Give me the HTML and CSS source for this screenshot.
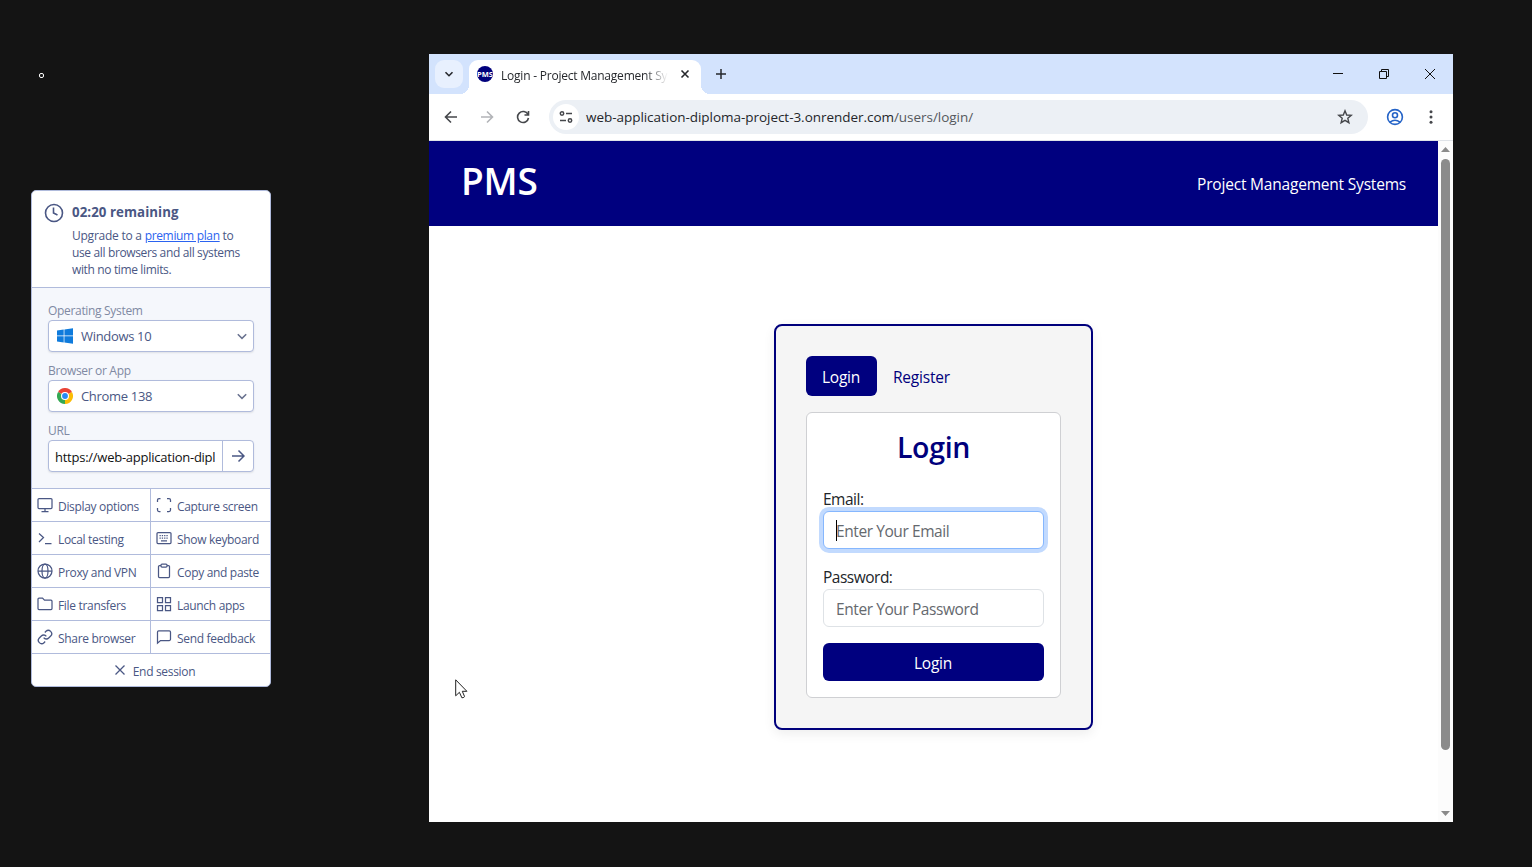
FILE: index.html
```html
<!DOCTYPE html>
<html lang="en">
<head>
<meta charset="utf-8">
<title>Browser session</title>
<link rel="stylesheet" href="styles.css">
</head>
<body>
<svg class="defs" width="0" height="0">
  <defs>
    <symbol id="chev" viewBox="0 0 12 12"><path d="M1.800 4.200 6 8.400l4.200-4.200"/></symbol>
  </defs>
</svg>
<div class="desk">
  <span class="dot"></span>
  <aside class="panel">
    <header class="status">
      <svg class="clock" viewBox="0 0 20 20"><circle cx="10" cy="10" r="8.500"/><path d="M9.500 4.500V10l4 2"/></svg>
      <div>
        <h1 class="remaining">02:20 remaining</h1>
        <p class="upgrade"><span class="lead">Upgrade to a <a href="#">premium plan</a> to</span><br>use all browsers and all systems<br>with no time limits.</p>
      </div>
    </header>
    <section class="settings">
      <label class="caption">Operating System</label>
      <div class="select">
        <svg class="brand" viewBox="0 0 16 16"><path fill="#0f7bdc" d="M0 2.500 6.700 1.500v6.100H0zM7.400 1.400 16 .2v7.400H7.400zM0 8.300h6.700v6.100L0 13.500zM7.400 8.300H16v7.500l-8.600-1.300z"/></svg>
        <span class="value">Windows 10</span>
        <svg class="chev"><use href="#chev"/></svg>
      </div>
      <label class="caption">Browser or App</label>
      <div class="select">
        <svg class="brand" viewBox="0 0 16 16"><path fill="#ea4335" d="M8 8 1.070 4A8 8 0 0 1 14.930 4z"/><path fill="#fbbc05" d="M8 8 14.930 4A8 8 0 0 1 8 16z"/><path fill="#34a853" d="M8 8V16A8 8 0 0 1 1.070 4z"/><path fill="#ea4335" d="M8 4h6.930L8 3.300z"/><path fill="#fbbc05" d="M11.460 10 8 16 9 10z"/><circle cx="8" cy="8" r="4" fill="#fff"/><circle cx="8" cy="8" r="2.900" fill="#2589f5"/></svg>
        <span class="value">Chrome 138</span>
        <svg class="chev"><use href="#chev"/></svg>
      </div>
      <label class="caption">URL</label>
      <div class="select url">
        <span class="address"><span>https://web-application-diploma-project</span></span>
        <span class="go"><svg viewBox="0 0 14 14"><path d="M1 7h12M7.500 1.500 13 7l-5.500 5.500"/></svg></span>
      </div>
    </section>
    <nav class="actions">
      <a><svg viewBox="0 0 16 16"><rect x="1" y="1.500" width="14" height="10" rx="1"/><path d="M8 11.500v3M4.500 14.500h7"/></svg>Display options</a>
      <a><svg viewBox="0 0 16 16"><path d="M1.500 5V3q0-1.500 1.500-1.500h1.500M11 1.500h2q1.500 0 1.500 1.500v2M14.500 11v2q0 1.500-1.500 1.500h-2M4.500 14.500H3q-1.500 0-1.500-1.500v-2"/></svg>Capture screen</a>
      <a><svg viewBox="0 0 16 16"><path d="m2 3.500 4.500 4L2 12M8 13.500h6.500"/></svg>Local testing</a>
      <a><svg viewBox="0 0 16 16"><rect x="1" y="2.500" width="14" height="11" rx="1"/><path stroke-dasharray="1.300 1" d="M3.500 5.500h9M3.500 8h9"/><path d="M5 10.800h6"/></svg>Show keyboard</a>
      <a><svg viewBox="0 0 16 16"><circle cx="8" cy="8" r="7"/><ellipse cx="8" cy="8" rx="3" ry="7"/><path d="M1 8h14"/></svg>Proxy and VPN</a>
      <a><svg viewBox="0 0 16 16"><path d="M5 2.500H3.500q-1 0-1 1v10q0 1 1 1h9q1 0 1-1v-10q0-1-1-1H11"/><rect x="5" y="1" width="6" height="3" rx="1"/></svg>Copy and paste</a>
      <a><svg viewBox="0 0 16 16"><path d="M1 3q0-1 1-1h3.500L7.500 4.200H14q1 0 1 1v7.300q0 1-1 1H2q-1 0-1-1z"/></svg>File transfers</a>
      <a><svg viewBox="0 0 16 16"><path d="M1.500 1.500h5v5h-5zM9.500 1.500h5v5h-5zM1.500 9.500h5v5h-5zM9.500 9.500h5v5h-5z"/></svg>Launch apps</a>
      <a><svg viewBox="0 0 24 24" class="link"><path d="M10 13a5 5 0 0 0 7.540.540l3-3a5 5 0 0 0-7.070-7.070l-1.720 1.710M14 11a5 5 0 0 0-7.540-.540l-3 3a5 5 0 0 0 7.070 7.070l1.710-1.710"/></svg>Share browser</a>
      <a><svg viewBox="0 0 16 16"><path d="M1.500 14.200V3q0-1.200 1.200-1.200h10.600q1.200 0 1.200 1.200v7.300q0 1.200-1.200 1.200H4.500z"/></svg>Send feedback</a>
    </nav>
    <a class="end"><svg viewBox="0 0 12 12"><path d="m1.500 1.500 9 9M10.500 1.500l-9 9"/></svg>End session</a>
  </aside>

  <main class="window">
    <div class="tabstrip">
      <span class="tabsearch"><svg viewBox="0 0 12 12"><path d="m2.500 4.200 3.500 3.500 3.500-3.500"/></svg></span>
      <div class="tab">
        <span class="favicon">PMS</span>
        <span class="tabtitle">Login - Project Management Systems</span>
        <svg class="x" viewBox="0 0 10 10"><path d="m1.500 1.500 7 7M8.500 1.500l-7 7"/></svg>
      </div>
      <svg class="plus" viewBox="0 0 12 12"><path d="M6 1v10M1 6h10"/></svg>
      <div class="controls">
        <svg viewBox="0 0 12 12"><path d="M1 5.500h10"/></svg>
        <svg viewBox="0 0 12 12"><path d="M1.500 3.500h7v7h-7zM3.500 3.500v-2h7v7h-2"/></svg>
        <svg viewBox="0 0 12 12"><path d="m1 1 10 10M11 1 1 11"/></svg>
      </div>
    </div>
    <div class="toolbar">
      <svg class="nav" viewBox="0 0 14 14"><path d="M13 7H2M7 1.500 1.500 7 7 12.500"/></svg>
      <svg class="nav off" viewBox="0 0 14 14"><path d="M1 7h11M7 1.500 12.500 7 7 12.500"/></svg>
      <svg class="nav" viewBox="0 0 14 14"><path d="M12 4.500A5.500 5.500 0 1 0 12.500 8M12.500 1v4H8.500"/></svg>
      <div class="omnibox">
        <span class="site"><svg viewBox="0 0 14 14"><circle cx="3" cy="3.500" r="1.700"/><path d="M7 3.500h6M1 10.500h6"/><circle cx="11" cy="10.500" r="1.700"/></svg></span>
        <span class="location">web-application-diploma-project-3.onrender.com<i>/users/login/</i></span>
        <svg class="star" viewBox="0 0 16 16"><path d="m8 1.800 1.700 4.200 4.600.3-3.500 3 1.100 4.400L8 11.300l-3.900 2.400 1.100-4.400-3.500-3 4.600-.3z"/></svg>
      </div>
      <svg class="avatar" viewBox="0 0 18 18"><circle cx="9" cy="9" r="7.400"/><circle cx="9" cy="7.200" r="2.500"/><path d="M4 14.200q5-4 10 0"/></svg>
      <svg class="more" viewBox="0 0 4 16"><circle cx="2" cy="2.700" r="1.500"/><circle cx="2" cy="8" r="1.500"/><circle cx="2" cy="13.300" r="1.500"/></svg>
    </div>
    <div class="viewport">
      <div class="page">
        <header class="masthead"><span class="logo">PMS</span><span class="tagline">Project Management Systems</span></header>
        <section class="card">
          <div class="pills"><a class="pill active">Login</a><a class="pill">Register</a></div>
          <form class="form">
            <h2>Login</h2>
            <label>Email:</label>
            <div class="field focus"><span class="caret"></span><span>Enter Your Email</span></div>
            <label>Password:</label>
            <div class="field"><span>Enter Your Password</span></div>
            <div class="submit">Login</div>
          </form>
        </section>
      </div>
      <div class="scrollbar">
        <svg viewBox="0 0 9 5"><path d="M0 5 4.500 0 9 5z"/></svg>
        <span class="thumb"></span>
        <svg viewBox="0 0 9 5"><path d="M0 0h9L4.500 5z"/></svg>
      </div>
    </div>
  </main>
  <svg class="pointer" viewBox="0 0 13 20"><path d="M.7.8v16l3.700-3.500 2.500 5.500q2.500 0 2.600-1.400L7.300 12.300h4.600z"/></svg>
</div>
</body>
</html>
```
FILE: styles.css
```css
* { box-sizing: border-box; }
body { margin: 0; background: #141414; font-family: "Open Sans", "Noto Sans", sans-serif; }
.defs { position: absolute; }
svg { display: block; fill: none; stroke: currentColor; flex: none; }
.desk { position: relative; display: flex; align-items: flex-start; width: 1532px; height: 867px; overflow: hidden; }
.dot { position: absolute; left: 39px; top: 73px; width: 5px; height: 5px; border: 1px solid #fff; border-radius: 2px; }

/* Session panel */
.panel { width: 240px; height: 497px; margin: 190px 0 0 31px; border: 1px solid #b0bbdc; border-radius: 5px; background: #fff; overflow: hidden; color: #4a5784; font-size: 12px; letter-spacing: -.32px; }
.status { display: flex; gap: 8px; height: 97px; padding: 12px 0 0 12px; border-bottom: 1px solid #b0bbdc; }
.clock { width: 20px; height: 20px; stroke-width: 1.600; }
.remaining { margin: 0; font-size: 13.300px; line-height: 19px; font-weight: 700; letter-spacing: .05px; }
.upgrade { margin: 5px 0 0; line-height: 17px; font-size: 12px; letter-spacing: -.36px; white-space: nowrap; }
.lead { letter-spacing: -.24px; }
.upgrade a { color: #2b63f0; letter-spacing: -.34px; }
.settings { height: 200px; padding: 12px 16px 0; background: #f5f7fc; }
.caption { display: block; height: 20px; line-height: 21px; color: #8089a3; }
.select { display: flex; align-items: center; height: 32px; margin-bottom: 8px; padding: 0 5px 0 8px; border: 1px solid #b0bbdc; border-radius: 4px; background: #fff; box-shadow: 0 1px 2px #00000018; font-size: 13px; }
.brand { width: 16px; height: 16px; stroke: none; }
.value { flex: 1; padding-left: 8px; }
.chev { width: 12px; height: 12px; stroke-width: 1.500; color: #69728f; }
.url { padding: 0; color: #111; letter-spacing: -.25px; }
.address { flex: 1; min-width: 0; padding: 0 7px 0 6px; }
.address span { display: block; overflow: hidden; white-space: nowrap; line-height: 29px; padding-top: 2px; }
.go { display: flex; align-items: center; justify-content: center; width: 31px; height: 30px; border-left: 1px solid #b0bbdc; color: #4a5784; }
.go svg { width: 14px; height: 14px; stroke-width: 1.500; }
.actions { display: grid; grid-template-columns: 119px 119px; }
.actions a { display: flex; align-items: center; gap: 5px; height: 33px; padding: 2px 0 0 5px; border-top: 1px solid #b0bbdc; white-space: nowrap; }
.actions a:nth-child(odd) { border-right: 1px solid #b0bbdc; }
.actions svg { width: 16px; height: 16px; stroke-width: 1.250; margin-top: -3px; }
.actions .link { stroke-width: 2; }
.end { display: flex; align-items: center; justify-content: center; gap: 7px; height: 33px; border-top: 1px solid #b0bbdc; padding-top: 2px; padding-left: 7px; }
.end svg { width: 12px; height: 12px; stroke-width: 1.300; margin-top: -3px; }

/* Browser frame */
.window { width: 1024px; height: 768px; margin: 54px 0 0 158px; background: #fff; color: #26282c; }
.tabstrip { display: flex; align-items: center; height: 40px; padding-left: 6px; background: #d3e3fd; }
.tabsearch { display: flex; align-items: center; justify-content: center; width: 28px; height: 28px; border-radius: 9px; background: #e8f0fe; }
.tabsearch svg { width: 12px; height: 12px; stroke-width: 1.600; }
.tab { position: relative; align-self: flex-end; display: flex; align-items: center; width: 232px; height: 34px; margin-left: 6px; padding: 0 11px 6px 8px; border-radius: 9px 9px 0 0; background: #fff; }
.tab::before, .tab::after { content: ""; position: absolute; bottom: 0; width: 9px; height: 9px; }
.tab::before { left: -9px; background: radial-gradient(circle at 0 0, transparent 9px, #fff 9px); }
.tab::after { right: -9px; background: radial-gradient(circle at 100% 0, transparent 9px, #fff 9px); }
.favicon { display: flex; align-items: center; justify-content: center; width: 16px; height: 16px; border-radius: 50%; background: #00007c; color: #fff; font-size: 7.500px; font-weight: 700; overflow: hidden; }
.tabtitle { flex: 1; margin: 0 12px 0 8px; padding-top: 2px; overflow: hidden; white-space: nowrap; font-size: 12px; letter-spacing: -.22px; -webkit-mask-image: linear-gradient(90deg, #000 86%, transparent); mask-image: linear-gradient(90deg, #000 86%, transparent); }
.x { width: 10px; height: 10px; stroke-width: 1.600; }
.plus { width: 12px; height: 12px; margin-left: 14px; stroke-width: 1.500; }
.controls { display: flex; gap: 34px; margin: 0 17px 0 auto; color: #111; }
.controls svg { width: 12px; height: 12px; }
.toolbar { display: flex; align-items: center; height: 47px; padding: 0 20px 1px 15px; border-bottom: 1px solid #dfe3e8; color: #45474b; background: #fff; }
.nav { width: 14px; height: 14px; margin-right: 22px; stroke-width: 1.600; }
.nav.off { color: #b2b4b8; }
.omnibox { display: flex; align-items: center; width: 819px; height: 34px; margin-left: -3px; padding: 0 15px 0 4px; border-radius: 17px; background: #ecf0f5; }
.site { display: flex; align-items: center; justify-content: center; width: 26px; height: 26px; border-radius: 50%; background: #fff; }
.site svg { width: 14px; height: 14px; stroke-width: 1.500; }
.location { flex: 1; padding-left: 7px; color: #24262a; font-size: 13.500px; letter-spacing: -.04px; }
.location i { font-style: normal; color: #55585d; }
.star { width: 16px; height: 16px; stroke-width: 1.400; }
.avatar { width: 18px; height: 18px; margin-left: 18px; stroke-width: 1.600; color: #2463c7; }
.more { width: 4px; height: 16px; margin-left: auto; fill: #45474b; stroke: none; }

/* Web page */
.viewport { display: flex; height: 681px; }
.page { flex: 1; color: #212529; font-size: 15.500px; letter-spacing: -.2px; }
.masthead { display: flex; align-items: center; justify-content: space-between; height: 85px; padding: 0 32px; background: #00007f; color: #fff; }
.logo { font-size: 37px; font-weight: 600; line-height: 50px; margin-top: -6px; }
.card { width: 319px; height: 406px; margin: 98px auto 0; padding: 30px; border: 2px solid #00007c; border-radius: 8px; background: #f5f5f5; box-shadow: 0 4px 12px #00000012; }
.pills { display: flex; height: 40px; margin-bottom: 16px; }
.pill { display: flex; align-items: center; padding: 1px 16px 0; border-radius: 6px; color: #00007c; }
.pill.active { width: 71px; justify-content: center; padding: 1px 1px 0 0; background: #00007f; color: #fff; }
.form { height: 286px; padding: 16px; border: 1px solid #cfd0d3; border-radius: 6px; background: #fff; }
.form h2 { margin: 0 0 22px; height: 36px; line-height: 37px; text-align: center; font-size: 28.500px; font-weight: 600; letter-spacing: -.3px; color: #00007c; }
.form label { display: block; height: 24px; line-height: 25px; letter-spacing: -.5px; }
.field { display: flex; align-items: center; height: 38px; margin-bottom: 16px; padding: 1px 12px 0; border: 1px solid #dee2e6; border-radius: 6px; color: #65696e; background: #fff; letter-spacing: -.42px; }
.focus { border-color: #86b7fe; box-shadow: 0 0 0 4px #c2dafe; }
.caret { width: 1px; height: 21px; margin-right: -1px; background: #000; }
.submit { display: flex; align-items: center; justify-content: center; height: 38px; padding: 1px 1px 0 0; border-radius: 6px; background: #00007f; color: #fff; }
.scrollbar { display: flex; flex-direction: column; align-items: center; width: 15px; padding: 6px 0; background: #fcfcfc; }
.scrollbar svg { width: 9px; height: 5px; fill: #8a8a8a; stroke: none; }
.thumb { width: 9px; height: 591px; margin: 7px 0 auto; border-radius: 5px; background: #8b8b8b; }
.pointer { position: absolute; left: 455px; top: 679px; width: 13px; height: 20px; fill: #fff; stroke: #222; }
```
